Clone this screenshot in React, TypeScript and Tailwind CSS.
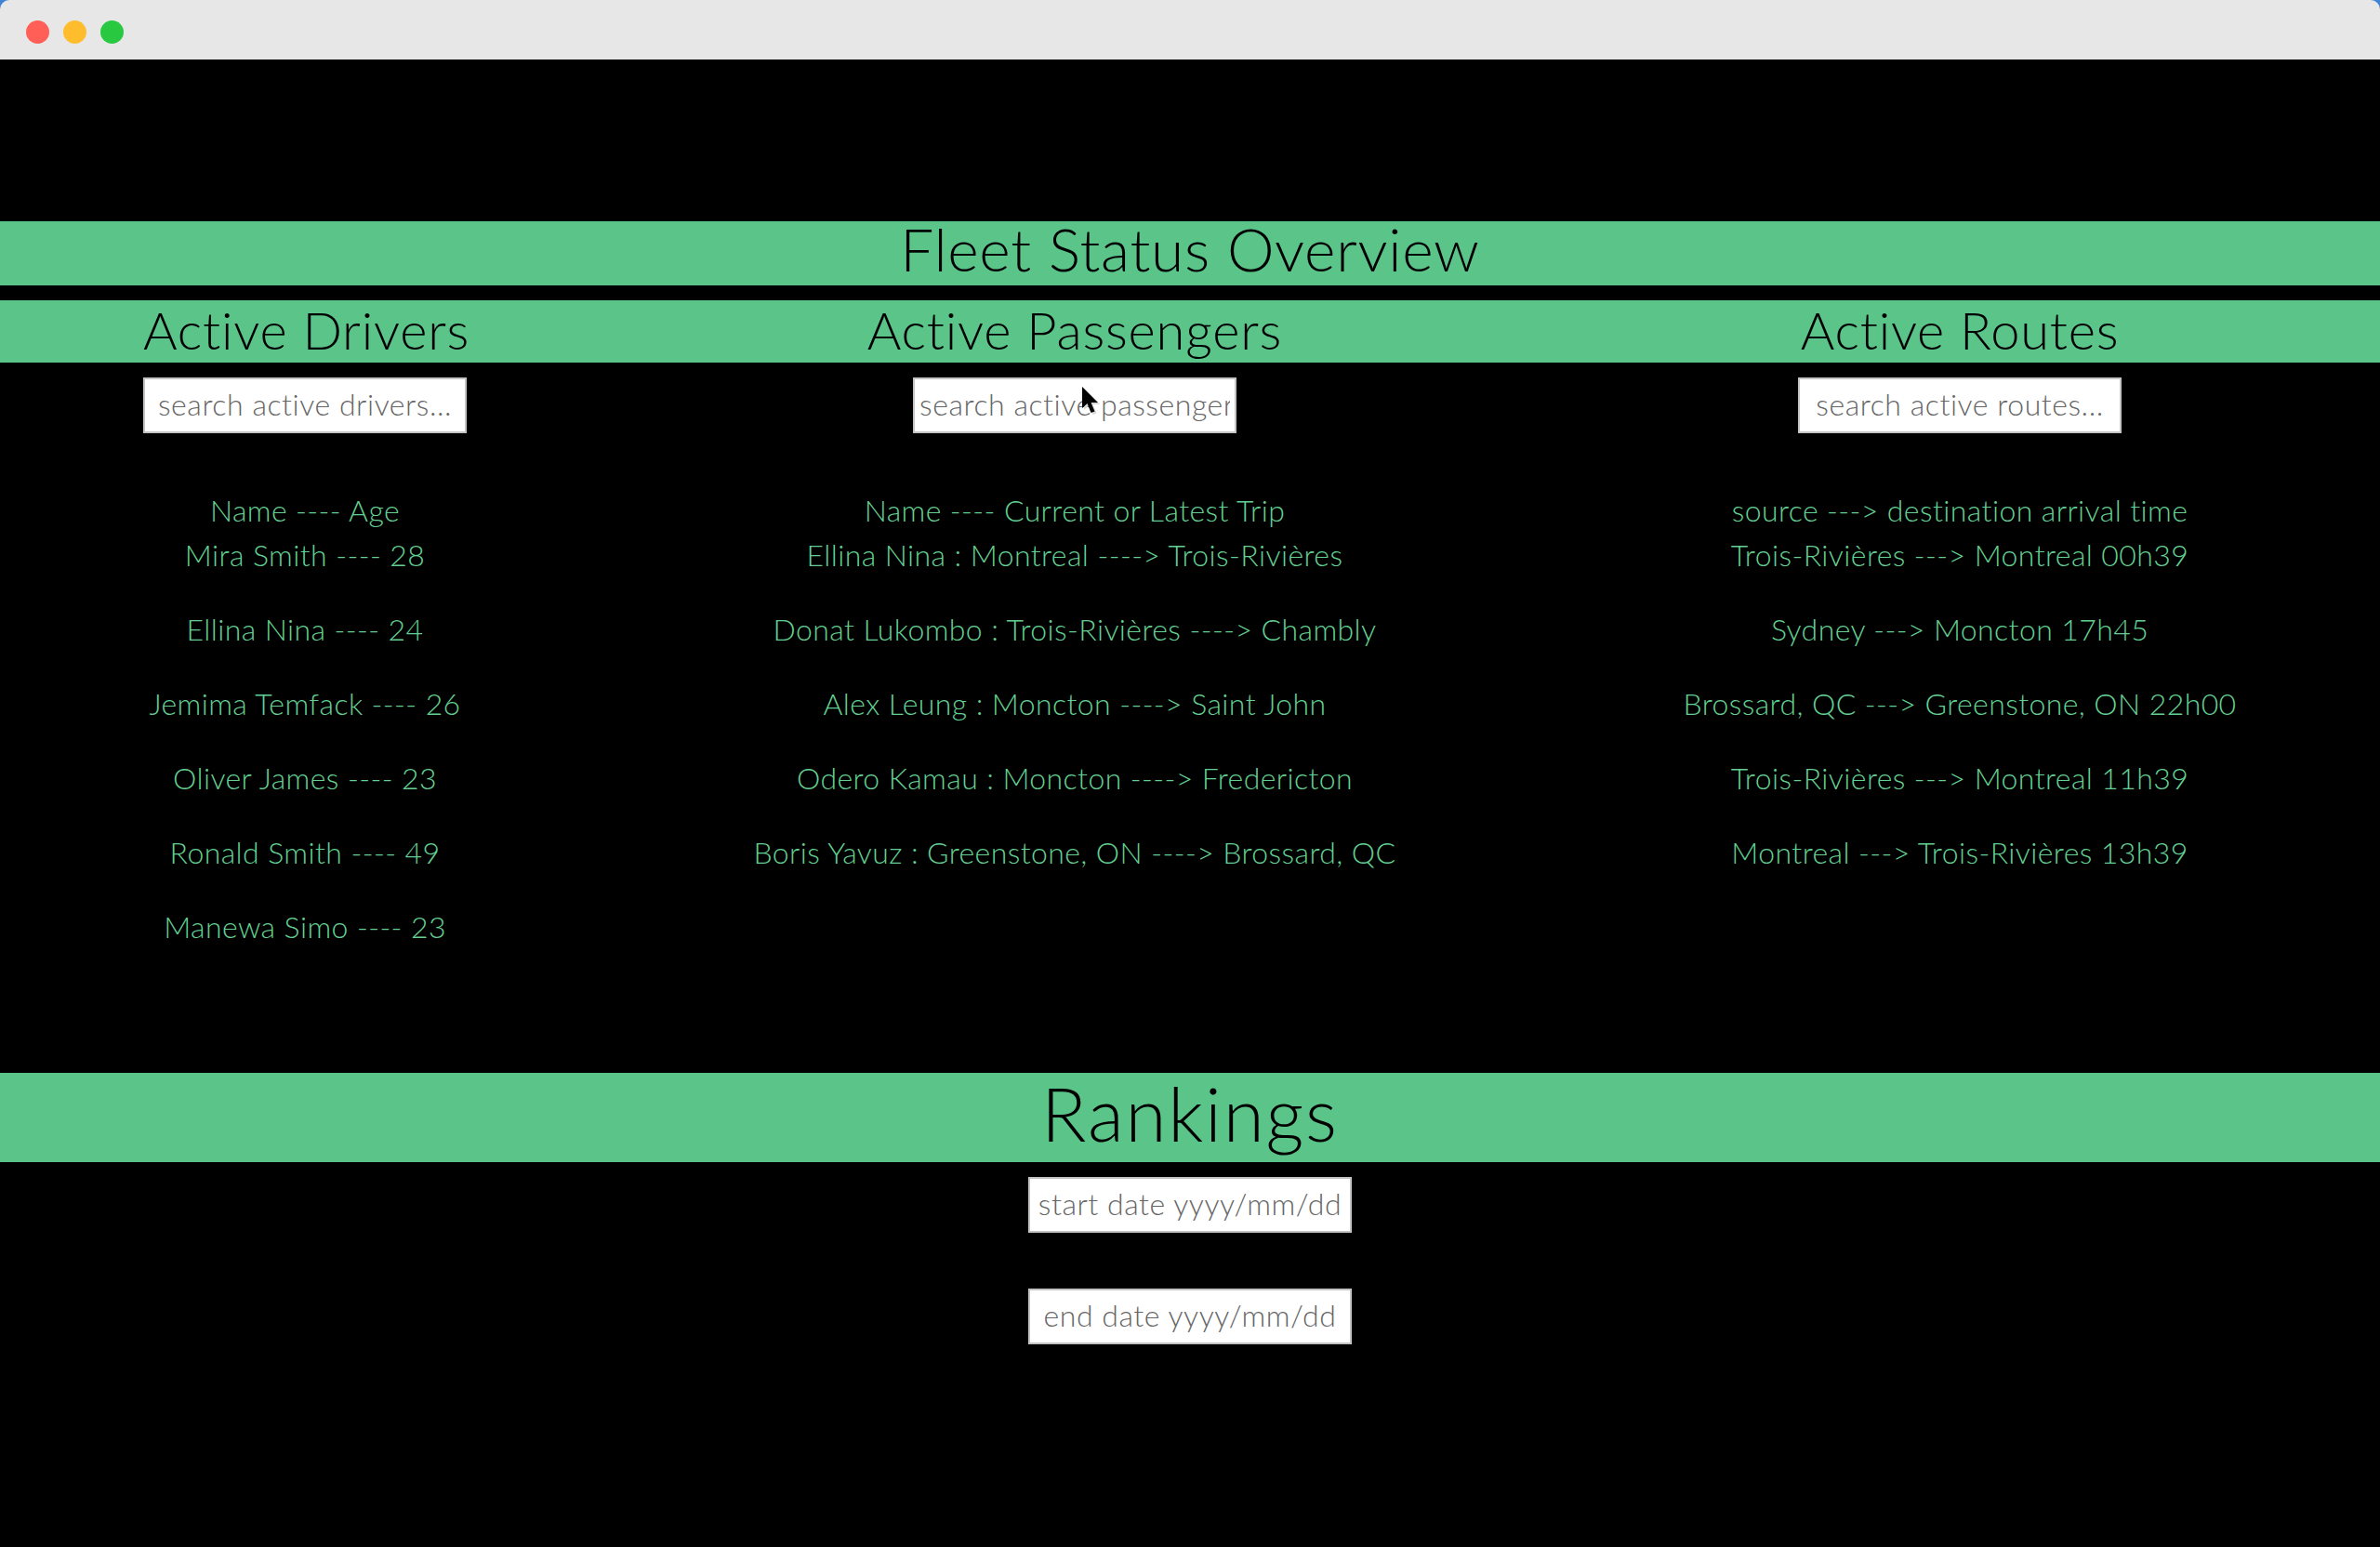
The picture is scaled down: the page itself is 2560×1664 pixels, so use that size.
const drivers = ['Mira Smith ---- 28', 'Ellina Nina ---- 24', 'Jemima Temfack ---- 26', 'Oliver James ---- 23', 'Ronald Smith ---- 49', 'Manewa Simo ---- 23'];
const passengers = [
  'Ellina Nina : Montreal ----> Trois-Rivières',
  'Donat Lukombo : Trois-Rivières ----> Chambly',
  'Alex Leung : Moncton ----> Saint John',
  'Odero Kamau : Moncton ----> Fredericton',
  'Boris Yavuz : Greenstone, ON ----> Brossard, QC',
];
const routes = [
  'Trois-Rivières ---> Montreal 00h39',
  'Sydney ---> Moncton 17h45',
  'Brossard, QC ---> Greenstone, ON 22h00',
  'Trois-Rivières ---> Montreal 11h39',
  'Montreal ---> Trois-Rivières 13h39',
];

const inputClass =
  "w-[348px] h-[60px] bg-white border-2 border-[#c4c4c4] px-[5px] pb-[3px] text-[32px] font-light tracking-[0.55px] text-center text-black placeholder:text-[#666666] outline-none font-['Lato',sans-serif]";

function Column({ width, header, rows }: { width: string; header: string; rows: string[] }) {
  return (
    <div className={`${width} flex flex-col items-center text-center`}>
      <p className="leading-[48px] whitespace-nowrap">{header}</p>
      {rows.map((r) => (
        <p key={r} className="leading-[48px] mb-8 whitespace-nowrap">
          {r}
        </p>
      ))}
    </div>
  );
}

export default function App() {
  return (
    <div className="relative w-[2560px] h-[1664px] bg-black overflow-hidden font-['Lato',sans-serif]">
      {/* title bar */}
      <div className="h-16 bg-[#3d83d6]">
        <div className="h-16 bg-[#e7e7e7] rounded-t-[10px] flex items-center gap-[15px] pl-7 pt-1">
          <div className="w-[25px] h-[25px] rounded-full bg-[#ff5f57]" />
          <div className="w-[25px] h-[25px] rounded-full bg-[#ffbd2e]" />
          <div className="w-[25px] h-[25px] rounded-full bg-[#28c940]" />
        </div>
      </div>

      <h1 className="mt-[174px] h-[69px] bg-[#5bc589] text-black text-center text-[64px] font-light tracking-[0.7px] leading-[60px]">
        Fleet Status Overview
      </h1>

      <div className="mt-4 h-[67px] bg-[#5bc589] flex justify-around text-black text-[56px] font-light tracking-[0.8px] leading-[63px] text-center">
        <h2 className="w-[348px] whitespace-nowrap">Active Drivers</h2>
        <h2 className="w-[692px] whitespace-nowrap">Active Passengers</h2>
        <h2 className="w-[596px] whitespace-nowrap">Active Routes</h2>
      </div>

      <div className="mt-4 flex justify-around">
        <div className="w-[348px]"><input className={inputClass} placeholder="search active drivers..." /></div>
        <div className="w-[692px] flex justify-center"><input className={inputClass} placeholder="search active passengers..." /></div>
        <div className="w-[596px] flex justify-center"><input className={inputClass} placeholder="search active routes..." /></div>
      </div>

      <div className="mt-[59px] h-[629px] flex justify-around text-[#63d092] text-[32px] font-light tracking-[0.4px]">
        <Column width="w-[348px]" header="Name ---- Age" rows={drivers} />
        <Column width="w-[692px]" header="Name ---- Current or Latest Trip" rows={passengers} />
        <Column width="w-[596px]" header="source ---> destination arrival time" rows={routes} />
      </div>

      <h1 className="h-24 bg-[#5bc589] text-black text-center text-[80px] font-light tracking-[1.8px] leading-[86px]">Rankings</h1>

      <div className="mt-4 flex flex-col items-center gap-[60px]">
        <input className={inputClass} placeholder="start date yyyy/mm/dd" />
        <input className={inputClass} placeholder="end date yyyy/mm/dd" />
      </div>

      {/* mouse pointer */}
      <svg className="absolute left-[1163px] top-[415px]" width="22" height="34" viewBox="0 0 22 34">
        <path d="M3 3 L3 26 L8.5 21 L12.5 31 L16.5 29.5 L12.5 20 L20 20 Z" fill="#d8d8d8" />
        <path d="M1 1 L1 24 L6.5 19 L10.5 29 L14.5 27.5 L10.5 18 L18 18 Z" fill="#000" />
      </svg>
    </div>
  );
}
